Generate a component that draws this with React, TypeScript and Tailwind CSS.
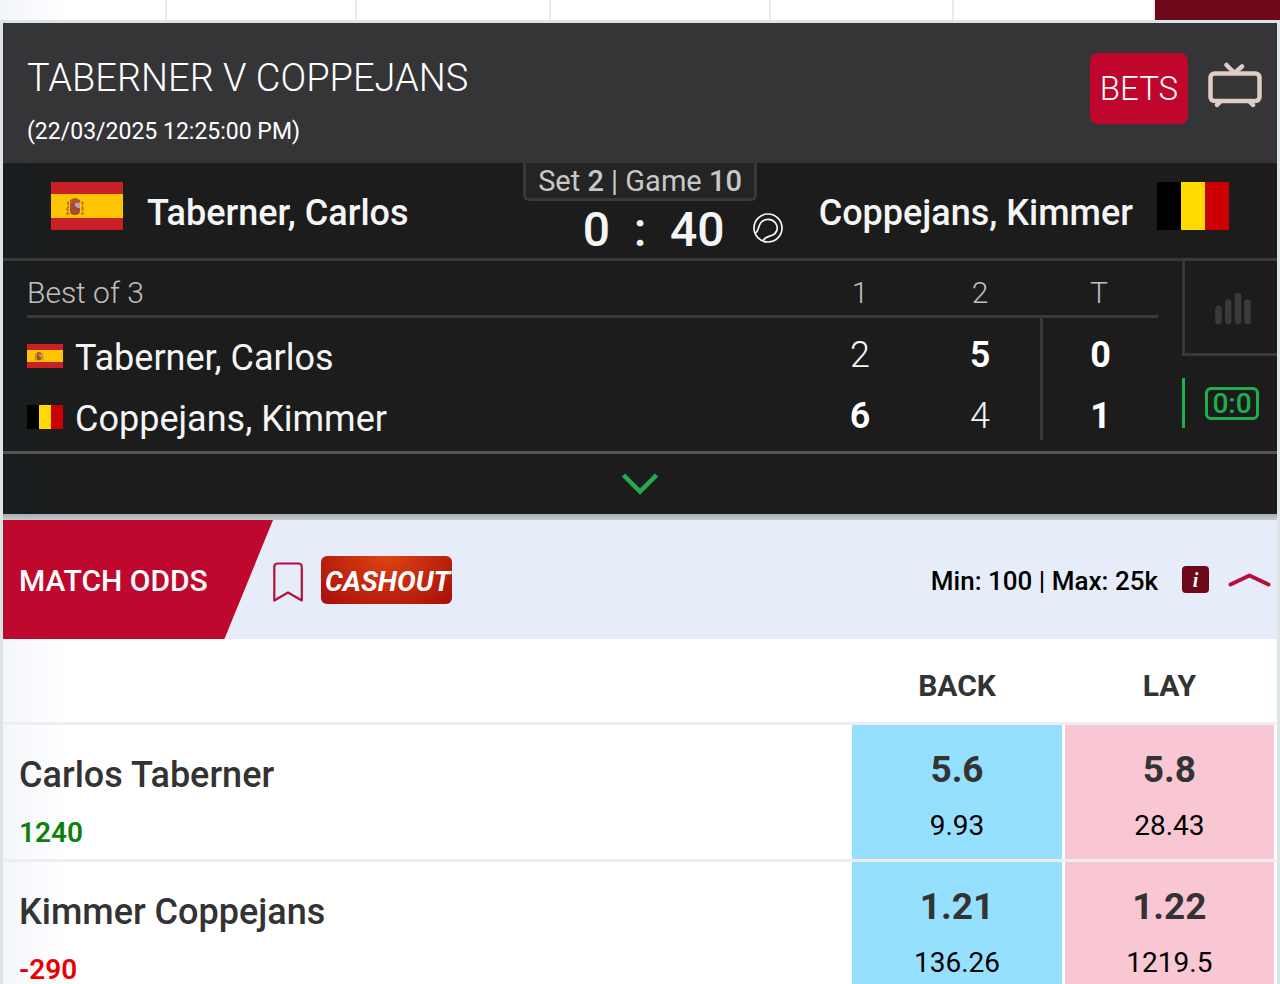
import React, { useState } from "react";
import clsx from "clsx";

type Country = "es" | "be";

interface Player {
  name: string;
  country: Country;
  sets: number[];
  total: number;
}

interface Runner {
  name: string;
  position: number;
  back: { price: string; size: string };
  lay: { price: string; size: string };
}

const players: Player[] = [
  { name: "Taberner, Carlos", country: "es", sets: [2, 5], total: 0 },
  { name: "Coppejans, Kimmer", country: "be", sets: [6, 4], total: 1 },
];

const runners: Runner[] = [
  {
    name: "Carlos Taberner",
    position: 1240,
    back: { price: "5.6", size: "9.93" },
    lay: { price: "5.8", size: "28.43" },
  },
  {
    name: "Kimmer Coppejans",
    position: -290,
    back: { price: "1.21", size: "136.26" },
    lay: { price: "1.22", size: "1219.5" },
  },
];

const Flag: React.FC<{ country: Country; className?: string }> = ({
  country,
  className,
}) => {
  if (country === "be") {
    return (
      <svg viewBox="0 0 72 48" className={className} aria-label="Belgium">
        <path d="M0 0h24v48H0z" fill="#000" />
        <path d="M24 0h24v48H24z" fill="#ffd900" />
        <path d="M48 0h24v48H48z" fill="#cc0000" />
      </svg>
    );
  }
  return (
    <svg viewBox="0 0 72 48" className={className} aria-label="Spain">
      <path d="M0 0h72v48H0z" fill="#c92028" />
      <path d="M0 12h72v24H0z" fill="#ffc400" />
      <path d="M18.500 18.500q5.500-5 11 0l-1.500 3h-8z" fill="#b5552b" />
      <path d="M19 21h10v8q0 4-5 4t-5-4z" fill="#ad4a26" />
      <path d="M24 21h5v5h-5z" fill="#b8a0a8" />
      <circle cx="24.500" cy="26.500" r="2" fill="#7b5078" />
      <path
        d="M17 21v11M31.500 21v11M15 27h3M30.500 27h3M15 32h3.500M30 32h3.500M16 20.500h2M30.500 20.500h2"
        stroke="#a8642c"
        strokeWidth="1.500"
        strokeDasharray="2 1"
      />
    </svg>
  );
};

const TvIcon = () => (
  <svg
    viewBox="0 0 54 46"
    className="mb-2 h-[46px] w-[54px]"
    fill="none"
    stroke="#ddcdc4"
    strokeWidth="4.500"
    strokeLinecap="round"
    strokeLinejoin="round"
  >
    <rect x="2.500" y="11.500" width="49" height="27.500" rx="4" />
    <path d="M18.500 3l8 8 7.500-6.500M12 40l-3 3M42 40l3 3" />
  </svg>
);

const BallIcon = () => (
  <svg
    viewBox="0 0 30 30"
    className="mb-1 size-[30px] shrink-0"
    fill="none"
    stroke="#f5f5f5"
    strokeWidth="1.700"
  >
    <circle cx="15" cy="15" r="14" />
    <path d="M2.500 20C6 17.500 5 13 8 9.500 12 5 19 5.500 22.500 10c3.500 5 1.500 10.500-4 12.500-3 1-6 1.500-8.500 5" />
  </svg>
);

const StatsIcon = () => (
  <svg
    viewBox="0 0 36 34"
    className="mt-1 h-[34px] w-9"
    stroke="#3a3a3a"
    strokeWidth="6.500"
    strokeLinecap="round"
  >
    <path d="M3.500 17v12M13.200 10.500V29M23 4v25M32.500 10.500V29" />
  </svg>
);

const tabs = ["tab-1", "tab-2", "tab-3", "tab-4", "tab-5", "tab-6"];

const TabStrip = () => (
  <div className="grid h-5 grid-cols-[167fr_190fr_194fr_220fr_183fr_201fr_125fr] bg-linear-to-r from-[#f2f4fb] to-white to-5%">
    {tabs.map((tab) => (
      <div key={tab} className="border-r-2 border-[#ebe9eb]" />
    ))}
    <div className="bg-[#6d071a]" />
  </div>
);

const EventHeader = () => (
  <header className="flex h-[140px] items-start justify-between bg-[#353537] pr-[15px] pl-6 text-white">
    <div className="pt-[29px]">
      <h1 className="text-[38px] leading-[52px] font-light">
        TABERNER V COPPEJANS
      </h1>
      <p className="text-[23px] leading-[56px]">(22/03/2025 12:25:00 PM)</p>
    </div>
    <div className="flex items-center gap-5 pt-[30px]">
      <button className="h-[71px] w-[98px] rounded-lg bg-[#c1062d] text-[33px] font-light">
        BETS
      </button>
      <button aria-label="Watch live">
        <TvIcon />
      </button>
    </div>
  </header>
);

const LiveScore = () => (
  <div className="grid h-[98px] grid-cols-[1fr_286px_1fr] border-b-3 border-[#393939] text-[#f5f5f5]">
    <div className="flex items-center gap-6 pt-1 pl-12 text-[36px] font-medium">
      <Flag country="es" className="mb-3.5 h-12 w-[72px]" />
      {players[0].name}
    </div>
    <div className="flex flex-col items-center">
      <p className="h-[38px] w-[234px] rounded-b-md border-3 border-t-0 border-[#393939] bg-[#242424] text-center text-[29px] leading-9 whitespace-nowrap text-[#c8c8c8]">
        Set <b className="font-medium">2</b> | Game{" "}
        <b className="font-medium">10</b>
      </p>
      <div className="grid w-full grid-cols-[1fr_60px_1fr] text-[48px] leading-[58px] font-medium">
        <span className="text-right">0</span>
        <span className="text-center">:</span>
        <span className="flex items-center justify-between">
          40
          <BallIcon />
        </span>
      </div>
    </div>
    <div className="flex items-center justify-end gap-6 pt-1 pr-12 text-[36px] font-medium">
      {players[1].name}
      <Flag country="be" className="mb-3.5 h-12 w-[72px]" />
    </div>
  </div>
);

const SetTable = () => (
  <table className="mb-[11px] ml-6 grow border-separate border-spacing-0 text-[#f5f5f5]">
    <thead>
      <tr className="h-[57px] text-[30px] leading-9 text-[#c0c0c0] *:border-b-3 *:border-[#393939] *:pt-2.5 *:font-light">
        <th className="text-left">Best of 3</th>
        <th className="w-[120px]">1</th>
        <th className="w-[120px]">2</th>
        <th className="w-[118px]">T</th>
      </tr>
    </thead>
    <tbody>
      {players.map(({ name, country, sets, total }, i) => (
        <tr key={name} className="h-[61px] text-[36px] leading-10">
          <th className="pt-[18px] text-left font-normal">
            <span className="flex items-center gap-3">
              <Flag country={country} className="mb-1 h-6 w-9" />
              {name}
            </span>
          </th>
          {sets.map((games, set) => (
            <td
              key={set}
              className={clsx(
                "pt-3 text-center",
                games > players[1 - i].sets[set]
                  ? "font-semibold text-white"
                  : "font-light"
              )}
            >
              {games}
            </td>
          ))}
          <td className="border-l-3 border-[#393939] pt-3 text-center font-bold text-white">
            {total}
          </td>
        </tr>
      ))}
    </tbody>
  </table>
);

const Scoreboard = () => (
  <section className="bg-linear-to-r from-[#181d1f] to-[#1c1c1c] to-5%">
    <LiveScore />
    <div className="flex gap-6 border-b-3 border-[#555]">
      <SetTable />
      <div className="flex w-[95px] flex-col gap-[22px]">
        <button
          aria-label="Statistics"
          className="flex h-[95px] items-center justify-center border-b-3 border-l-3 border-[#393939] pl-1"
        >
          <StatsIcon />
        </button>
        <button className="flex h-[50px] items-center border-l-3 border-[#1fae4b] pl-5">
          <span className="h-[33px] w-[54px] rounded-md border-3 border-[#1fae4b] text-center text-[28px] leading-[27px] font-medium text-[#1fae4b]">
            0:0
          </span>
        </button>
      </div>
    </div>
    <button
      aria-label="Expand scoreboard"
      className="flex h-[60px] w-full items-center justify-center"
    >
      <svg
        viewBox="0 0 36 22"
        className="h-[22px] w-9"
        fill="none"
        stroke="#1fae4b"
        strokeWidth="4.500"
      >
        <path d="M1.500 2L18 18.500 34.500 2" />
      </svg>
    </button>
  </section>
);

interface MarketHeaderProps {
  open: boolean;
  onToggle: () => void;
}

const MarketHeader: React.FC<MarketHeaderProps> = ({ open, onToggle }) => (
  <div className="flex h-[119px] items-center bg-[#e7edf8]">
    <h2 className="flex h-full w-[270px] items-center bg-[#bf082e] pt-0.5 pl-4 text-[30px] font-medium text-white [clip-path:polygon(0_0,100%_0,82%_100%,0_100%)]">
      MATCH ODDS
    </h2>
    <button aria-label="Bookmark market" className="mt-1 mr-[18px]">
      <svg
        viewBox="0 0 30 40"
        className="h-10 w-[30px]"
        fill="none"
        stroke="#b5103a"
        strokeWidth="2.200"
        strokeLinejoin="round"
      >
        <path d="M1.300 38.500V5q0-3.500 3.500-3.500h20.500q3.500 0 3.500 3.500v33.500l-13.800-8z" />
      </svg>
    </button>
    <button className="h-12 w-[131px] overflow-hidden rounded-md bg-radial-[at_50%_0%] from-[#dc4412] to-[#a90d0a] pt-1 pl-1 text-left text-[28px] font-bold whitespace-nowrap text-white italic">
      CASHOUT
    </button>
    <p className="mt-1 ml-auto text-[26px] font-medium text-black">
      Min: 100 | Max: 25k
    </p>
    <button
      aria-label="Market rules"
      className="ml-6 size-[27px] rounded-sm bg-[#6d071a] font-['Liberation_Serif',serif] text-[20px] leading-[26px] font-bold text-white italic"
    >
      i
    </button>
    <button
      aria-label="Toggle market"
      onClick={onToggle}
      className={clsx("mr-1.5 ml-[19px]", !open && "rotate-180")}
    >
      <svg
        viewBox="0 0 43 16"
        className="h-4 w-[43px]"
        fill="none"
        stroke="#b5103a"
        strokeWidth="4"
        strokeLinecap="round"
        strokeLinejoin="round"
      >
        <path d="M2.500 12.500L21.500 3.500 40.500 12.500" />
      </svg>
    </button>
  </div>
);

const OddsTable = () => (
  <table className="w-full table-fixed border-separate border-spacing-0 text-[#333]">
    <thead>
      <tr className="h-[86px] text-[30px] *:border-b-3 *:border-[#efedf2] *:pt-2.5">
        <td />
        <th className="w-1/6 pr-[3px] font-bold">BACK</th>
        <th className="w-1/6 pr-[3px] font-bold">LAY</th>
      </tr>
    </thead>
    <tbody>
      {runners.map(({ name, position, back, lay }) => (
        <tr key={name} className="*:border-b-3 *:border-[#efedf2]">
          <th className="pt-[26px] pl-4 text-left align-top">
            <p className="text-[36px] leading-[48px] font-medium">{name}</p>
            <p
              className={clsx(
                "mt-2.5 text-[28px] leading-[48px] font-semibold",
                position < 0 ? "text-[#e60000]" : "text-[#0b800b]"
              )}
            >
              {position}
            </p>
          </th>
          <td className="pr-[3px]">
            <button className="block h-[134px] w-full bg-[#95dfff] pt-3">
              <span className="block text-[37px] leading-[56px] font-bold">
                {back.price}
              </span>
              <span className="block text-[28px] leading-[56px] text-black">
                {back.size}
              </span>
            </button>
          </td>
          <td className="pr-[3px]">
            <button className="block h-[134px] w-full bg-[#f9c7d3] pt-3">
              <span className="block text-[37px] leading-[56px] font-bold">
                {lay.price}
              </span>
              <span className="block text-[28px] leading-[56px] text-black">
                {lay.size}
              </span>
            </button>
          </td>
        </tr>
      ))}
    </tbody>
  </table>
);

const App: React.FC = () => {
  const [open, setOpen] = useState(true);

  return (
    <div className="h-screen overflow-hidden bg-white font-[Roboto,sans-serif]">
      <TabStrip />
      <main className="border-3 border-[#dce5e5] bg-linear-to-r from-[#f4f6fb] to-white to-5%">
        <EventHeader />
        <Scoreboard />
        <div className="h-1.5 bg-linear-to-b from-[#a4adad] to-[#c3cbcb]" />
        <MarketHeader open={open} onToggle={() => setOpen((prev) => !prev)} />
        {open && <OddsTable />}
      </main>
    </div>
  );
};

export default App;
